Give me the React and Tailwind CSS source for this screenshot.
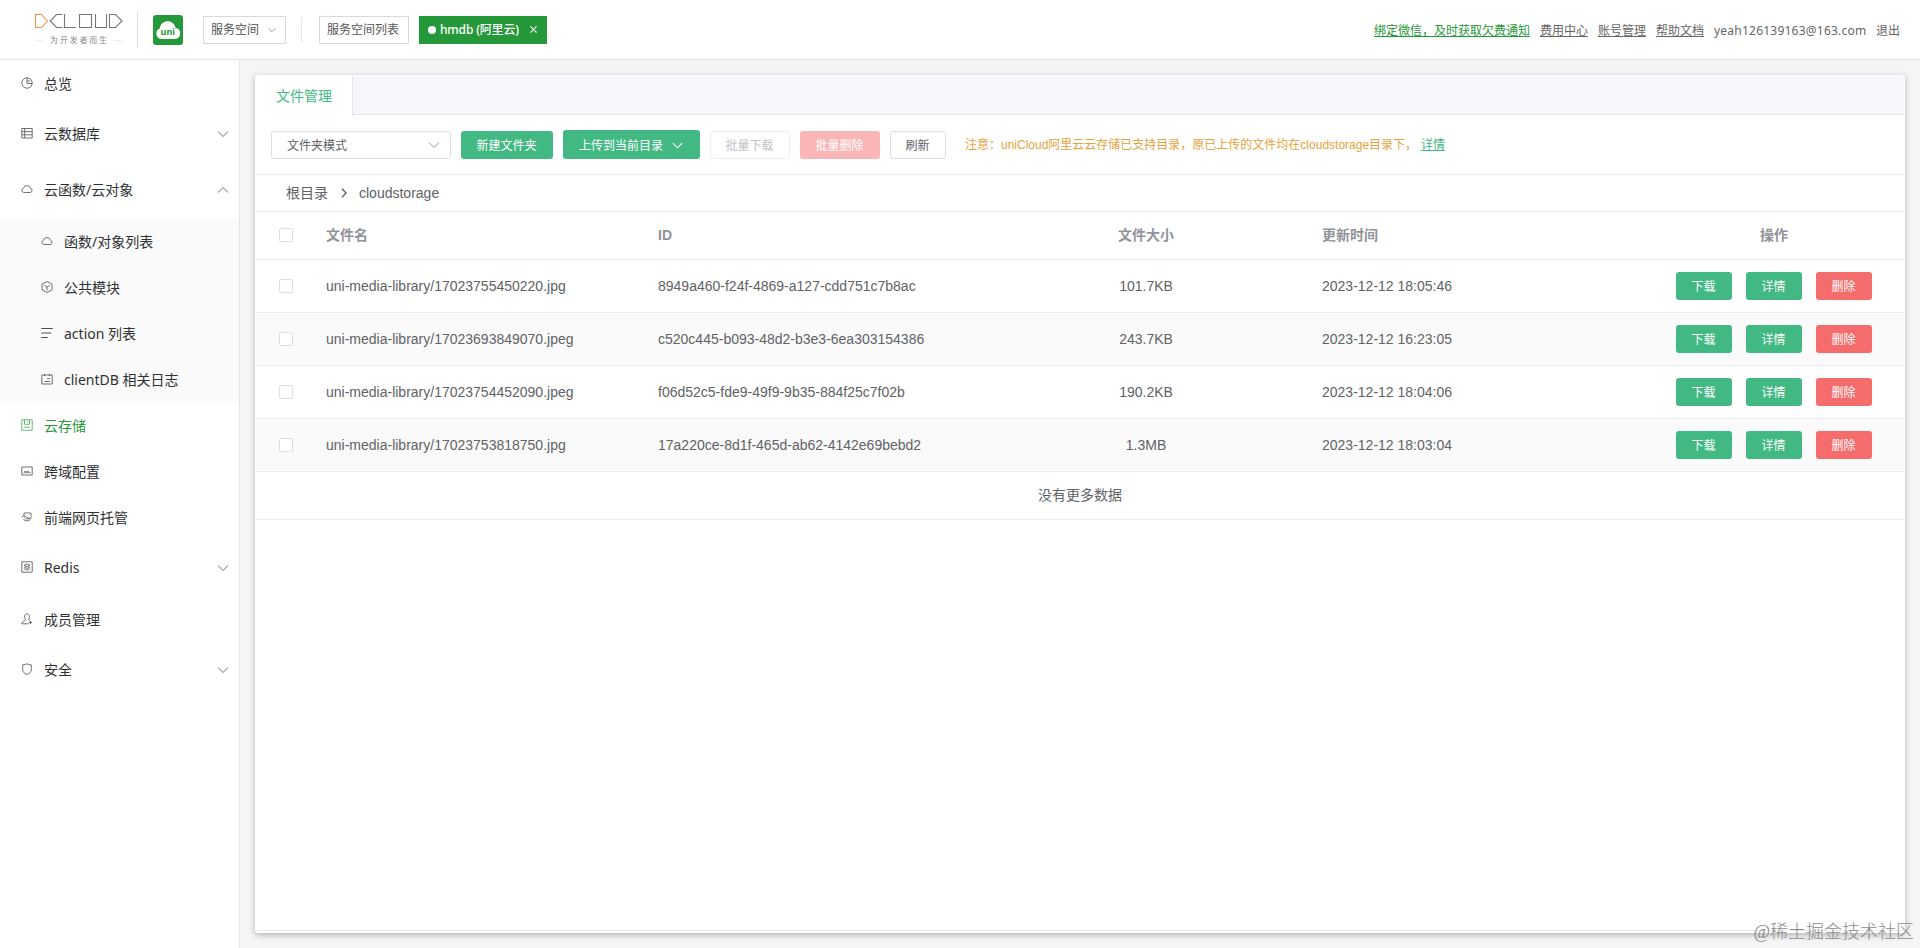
import { useState } from 'react';
import clsx from 'clsx';

const CJK = "font-['Noto_Sans','Noto_Sans_CJK_SC',sans-serif]";
const ARIAL = "font-['Liberation_Sans','Noto_Sans_CJK_SC',sans-serif]";

const FILES = [
  { name: 'uni-media-library/17023755450220.jpg', id: '8949a460-f24f-4869-a127-cdd751c7b8ac', size: '101.7KB', time: '2023-12-12 18:05:46' },
  { name: 'uni-media-library/17023693849070.jpeg', id: 'c520c445-b093-48d2-b3e3-6ea303154386', size: '243.7KB', time: '2023-12-12 16:23:05' },
  { name: 'uni-media-library/17023754452090.jpeg', id: 'f06d52c5-fde9-49f9-9b35-884f25c7f02b', size: '190.2KB', time: '2023-12-12 18:04:06' },
  { name: 'uni-media-library/17023753818750.jpg', id: '17a220ce-8d1f-465d-ab62-4142e69bebd2', size: '1.3MB', time: '2023-12-12 18:03:04' },
];

const ICONS = {
  pie: <><circle cx="6" cy="6" r="5.2" /><path d="M6 1v5.500h5M6 4h3" /></>,
  table: <path d="M.8 1.500h10.400v9.500H.8zM.8 4.600h10.400M.8 7.800h10.400M3.700 1.500V11" />,
  cloud: <path d="M2.800 9.500a2.200 2.200 0 0 1-.2-4.300 3.500 3.500 0 0 1 6.800 0 2.200 2.200 0 0 1-.2 4.300z" />,
  box: <path d="M6 .5l5 2.700v5.600l-5 2.700-5-2.700V3.200zM3.200 4.500L6 6l2.800-1.500M6 6v3.500" />,
  lines: <path d="M.3 1.500h11.400M.3 6h10M.3 10.500h6.500" strokeWidth="1.200" />,
  log: <path d="M.8 2h10.400v9H.8zM3.500 1v2M8.500 1v2M6 5.700h3M3.500 8.500H9" />,
  save: <path d="M.8.8h10.400v10.400H.8zM3.500 1v4.300h5V1M6.700 2v1.500M3 8.200h6" />,
  card: <path d="M.8 2h10.400v8H.8zM2.500 7.800h1.200V6.500H5v1.300h1.200V6.500h1.300v1.300h2" />,
  host: <path d="M3 5V2h7v3M1 6.500c0-2 3-2 4.500-.5s4 1.500 5.500-.5M2.500 8c1 2.500 6 2.500 7.500-.5M3.500 6.500l2 1.500 3-.5" />,
  redis: <><path d="M.8.8h10.400v10.400H.8z" /><path d="M6 3l3 1.300-3 1.400-3-1.400zM3 6l3 1.400L9 6M3 7.700l3 1.400 3-1.400" /></>,
  user: <path d="M4.500 6.500C2.800 4.500 3.500.8 6 .8s3.200 3.700 1.500 5.700c0 1 1 1 2 1.700M4.500 6.500c0 1.700-3.700 1-3.700 4.300h7M9.500 8v3M8 9.500h3" />,
  shield: <path d="M6 .8c1.500.8 2.800 1 4.300 1V7C10.300 9.200 8.500 10.500 6 11.400 3.500 10.500 1.700 9.200 1.700 7V1.800C3.200 1.800 4.500 1.600 6 .8z" />,
};

const MENU = [
  { icon: 'pie', label: '总览' },
  { icon: 'table', label: '云数据库', group: true },
  {
    icon: 'cloud',
    label: '云函数/云对象',
    group: true,
    children: [
      { icon: 'cloud', label: '函数/对象列表' },
      { icon: 'box', label: '公共模块' },
      { icon: 'lines', label: 'action 列表' },
      { icon: 'log', label: 'clientDB 相关日志' },
    ],
  },
  { icon: 'save', label: '云存储', active: true },
  { icon: 'card', label: '跨域配置' },
  { icon: 'host', label: '前端网页托管' },
  { icon: 'redis', label: 'Redis', group: true },
  { icon: 'user', label: '成员管理' },
  { icon: 'shield', label: '安全', group: true },
];

function MenuIcon({ name }) {
  return (
    <svg viewBox="0 0 12 12" className="size-3 shrink-0 -translate-y-px opacity-85" fill="none" stroke="currentColor" strokeWidth="0.8">
      {ICONS[name]}
    </svg>
  );
}

function Chevron({ className }) {
  return (
    <svg viewBox="0 0 12 12" className={clsx('shrink-0', className)} fill="none" stroke="currentColor" strokeWidth="1.1">
      <path d="M1 3.500l5 5 5-5" />
    </svg>
  );
}

function Logo() {
  return (
    <div className="w-[89px] ml-[34px] flex flex-col items-center">
      <svg viewBox="0 0 89 16" className="w-[89px] h-4" fill="none" strokeWidth="1.100">
        <path d="M1.500 1.500h6l6 6.500-6 6.500h-6z" stroke="#e8944f" />
        <path d="M28.500 1.500h-6L16.200 8l6.300 6.500h6M30.500 1v13.500H42M45.500 1.500h12v13h-12zM61.500 1v13.500h11V1M75.500 14.500v-13h6L88 8l-6.500 6.500z" stroke="#777" />
      </svg>
      <div className="flex items-center gap-[7px] mt-[5px]">
        <i className="w-2 h-px bg-[#eee]" />
        <span className="text-[8px] leading-[12px] tracking-[1.800px] -mr-[2px] text-[#888]">为开发者而生</span>
        <i className="w-2 h-px bg-[#eee]" />
      </div>
    </div>
  );
}

function Header() {
  return (
    <header className="h-[60px] shrink-0 bg-white border-b border-[#e4e4e4] flex items-center text-xs text-[#555]">
      <Logo />
      <div className="w-px h-9 bg-[#dcdcdc] ml-[14px]" />
      <div className="size-[30px] rounded-[3px] bg-[#259939] ml-[15px] flex items-center justify-center">
        <svg viewBox="0 0 30 30" className="size-[30px]">
          <path d="M8 24a5.500 5.500 0 0 1-1.300-10.500C7.500 8.500 11 6.300 14.500 6.300c4 0 7 2.200 8 6.400A5.700 5.700 0 0 1 22 24z" fill="#fff" />
          <text x="14.800" y="20" textAnchor="middle" fontSize="9" fontWeight="bold" fontFamily="Noto Sans" fill="#259939">uni</text>
        </svg>
      </div>
      <button className="h-7 w-[83px] ml-5 border border-[#d9d9d9] flex items-center pl-[7px] pt-px gap-[9px]">
        服务空间
        <Chevron className="size-2 text-[#777]" />
      </button>
      <div className="w-px h-[25px] bg-[#e4e4e4] ml-[15px]" />
      <button className="h-7 w-[90px] ml-[17px] pr-0.5 border border-[#d9d9d9]">服务空间列表</button>
      <div className="h-7 w-32 ml-[10px] bg-[#259939] text-white font-medium flex items-center pl-[9px]">
        <i className="size-2 rounded-full bg-white mr-1" />
        <span className="tracking-[-0.150px]">hmdb (阿里云)</span>
        <svg viewBox="0 0 8 8" className="size-[7px] ml-auto mr-[10px]" stroke="#fff" strokeWidth="1.300">
          <path d="M.5.5l7 7M7.500.5l-7 7" />
        </svg>
      </div>
      <nav className="ml-auto mr-5 pt-0.5 flex gap-[10px] text-[#666]">
        <a className="underline text-[#259939]">绑定微信，及时获取欠费通知</a>
        <a className="underline">费用中心</a>
        <a className="underline">账号管理</a>
        <a className="underline">帮助文档</a>
        <span className="w-[152px] whitespace-nowrap tracking-[0.230px]">yeah126139163@163.com</span>
        <span>退出</span>
      </nav>
    </header>
  );
}

function MenuItem({ item, sub }) {
  return (
    <div
      className={clsx(
        'flex items-center pr-[10px] gap-[11px] cursor-pointer',
        item.group ? 'h-14 pb-0.5' : 'h-[46px]',
        sub ? 'pl-[41px]' : 'pl-[21px]',
        item.active ? 'text-[#259939]' : 'text-[#303133]',
      )}
    >
      <MenuIcon name={item.icon} />
      <span className="text-sm">{item.label}</span>
      {item.group && (
        <Chevron className={clsx('size-3 ml-auto text-[#aaa]', item.children && 'rotate-180')} />
      )}
    </div>
  );
}

function Sidebar() {
  return (
    <aside className="w-60 shrink-0 bg-white border-r border-[#e6e6e6] pt-px">
      {MENU.map(item => (
        <div key={item.label}>
          <MenuItem item={item} />
          {item.children && (
            <div className="bg-[#fafafa]">
              {item.children.map(child => <MenuItem key={child.label} item={child} sub />)}
            </div>
          )}
        </div>
      ))}
    </aside>
  );
}

function Button({ className, children }) {
  return (
    <button className={clsx('rounded-[3px] text-xs flex items-center justify-center pt-0.5 pr-px cursor-pointer', className)}>
      {children}
    </button>
  );
}

function Checkbox({ checked, onChange }) {
  return (
    <input
      type="checkbox"
      checked={checked}
      onChange={onChange}
      className="block appearance-none size-[14px] rounded-[2px] border border-[#dcdfe6] bg-white checked:bg-[#42b983]"
    />
  );
}

const GRID = 'grid grid-cols-[70px_332px_405px_166px_415px_1fr] items-center border-b border-[#ebeef5]';

function FileTable() {
  const [selected, setSelected] = useState([]);
  const allSelected = selected.length === FILES.length;

  function toggle(id) {
    setSelected(s => (s.includes(id) ? s.filter(v => v !== id) : [...s, id]));
  }

  return (
    <div className="text-sm text-[#606266]">
      <div className={clsx(GRID, 'h-12 pb-0.5 font-bold text-[#909399]')}>
        <div className="pl-[23px]">
          <Checkbox checked={allSelected} onChange={() => setSelected(allSelected ? [] : FILES.map(f => f.id))} />
        </div>
        <span>文件名</span>
        <span>ID</span>
        <span className="text-center">文件大小</span>
        <span className="pl-[93px]">更新时间</span>
        <span className="text-center">操作</span>
      </div>
      {FILES.map((file, i) => (
        <div key={file.id} className={clsx(GRID, 'h-[53px]', i % 2 === 1 && 'bg-[#fafafa]')}>
          <div className="pl-[23px]">
            <Checkbox checked={selected.includes(file.id)} onChange={() => toggle(file.id)} />
          </div>
          <span>{file.name}</span>
          <span>{file.id}</span>
          <span className="text-center">{file.size}</span>
          <span className="pl-[93px]">{file.time}</span>
          <div className="flex justify-center gap-[14px] text-white">
            <Button className="h-7 w-14 bg-[#42b983]">下载</Button>
            <Button className="h-7 w-14 bg-[#42b983]">详情</Button>
            <Button className="h-7 w-14 bg-[#f56c6c]">删除</Button>
          </div>
        </div>
      ))}
      <div className="h-12 border-b border-[#ebeef5] flex items-center justify-center pb-0.5">没有更多数据</div>
    </div>
  );
}

function Toolbar() {
  return (
    <div className="h-[60px] border-b border-[#ebeef5] flex items-end pb-[15px] pl-[15px] gap-[10px]">
      <div className="w-[180px] h-7 rounded-[3px] border border-[#dcdfe6] flex items-center justify-between pl-[15px] pr-[10px] text-xs text-[#606266]">
        <span className="pt-0.5">文件夹模式</span>
        <Chevron className="size-3 text-[#c0c4cc]" />
      </div>
      <Button className="h-7 w-[92px] bg-[#42b983] text-white">新建文件夹</Button>
      <Button className="h-[29px] w-[137px] bg-[#42b983] text-white gap-[9px]">
        上传到当前目录
        <Chevron className="size-[11px]" />
      </Button>
      <Button className="h-7 w-20 border border-[#ebeef5] text-[#c0c4cc]">批量下载</Button>
      <Button className="h-7 w-20 bg-[#fab6b6] text-white">批量删除</Button>
      <Button className="h-7 w-14 border border-[#dcdfe6] text-[#606266]">刷新</Button>
      <p className="h-7 flex items-center pl-[9px] text-xs text-[#e6a23c]">
        注意：uniCloud阿里云云存储已支持目录，原已上传的文件均在cloudstorage目录下，
        <a className="underline text-[#42b983] ml-1">详情</a>
      </p>
    </div>
  );
}

export default function App() {
  return (
    <div className={clsx(CJK, 'h-screen flex flex-col bg-[#f5f5f5] overflow-hidden relative')}>
      <Header />
      <div className="flex flex-1 min-h-0">
        <Sidebar />
        <main className="flex-1 p-[15px] min-w-0">
          <section className={clsx(ARIAL, 'h-full flex flex-col bg-white rounded-[3px] border border-white pb-px shadow-[0_2px_6px_rgba(0,0,0,0.28)]')}>
            <div className="h-[39px] flex text-sm">
              <div className="w-24 flex items-center justify-center pt-px text-[#42b983]">文件管理</div>
              <div className="flex-1 bg-[#f5f7fa] border-l border-b border-[#dfe4ed]" />
            </div>
            <Toolbar />
            <div className="h-[37px] border-b border-[#ebeef5] flex items-center pl-[30px] text-sm text-[#606266]">
              根目录
              <svg viewBox="0 0 8 10" className="w-2 h-[10px] ml-3 mr-[11px]" fill="none" stroke="currentColor" strokeWidth="1.400">
                <path d="M2 .8L6 5 2 9.200" />
              </svg>
              cloudstorage
            </div>
            <div className="flex-1 border-b border-[#ebebeb]">
              <FileTable />
            </div>
          </section>
        </main>
      </div>
      <div className="absolute right-[6px] bottom-[3px] text-lg leading-[26px] text-[#8c8c8c] font-['Liberation_Serif','Noto_Sans_CJK_SC',serif] font-light">
        @稀土掘金技术社区
      </div>
    </div>
  );
}
